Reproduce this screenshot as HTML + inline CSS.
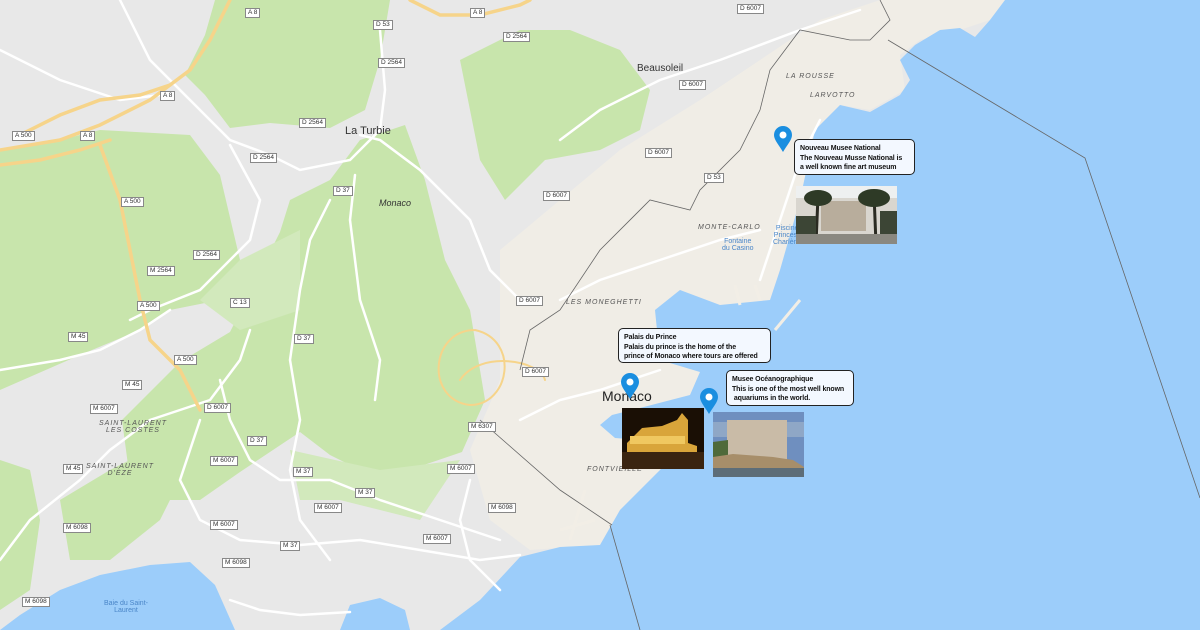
<!DOCTYPE html>
<html><head><meta charset="utf-8"><style>
html,body{margin:0;padding:0;width:1200px;height:630px;overflow:hidden;background:#e9e9e9;font-family:"Liberation Sans",sans-serif}
.box{position:absolute;background:#f3f8ff;border:1.5px solid #222;border-radius:5px;font:bold 7px/9.5px "Liberation Sans",sans-serif;color:#111;padding:4px 5px;box-sizing:border-box;white-space:nowrap;letter-spacing:-0.1px}
.ph{position:absolute}
.sh span{white-space:nowrap;line-height:8px}
</style></head><body>
<svg width="1200" height="630" style="position:absolute;left:0;top:0" xmlns="http://www.w3.org/2000/svg">
<rect width="1200" height="630" fill="#e8e8e8"/>
<path d="M500,250 L560,200 L620,150 L700,100 L760,60 L820,20 L880,0 L1005,0 L990,20 L960,30 L920,40 L900,55 L905,90 L870,110 L840,105 L815,130 L800,200 L780,270 L770,300 L720,310 L680,290 L655,310 L660,360 L700,372 L690,395 L640,408 L610,420 L630,440 L700,420 L660,470 L620,510 L600,545 L530,550 L490,520 L470,450 L500,380 Z" fill="#f0ede6"/>
<g fill="#c8e5ac">
<path d="M215,0 L390,0 L380,60 L365,110 L330,128 L270,123 L230,128 L205,95 L185,75 L205,35 Z"/>
<path d="M0,150 L60,140 L100,130 L190,135 L220,175 L240,260 L220,300 L170,310 L140,330 L80,355 L0,390 Z"/>
<path d="M290,200 L330,180 L360,140 L405,125 L425,180 L445,260 L470,310 L485,400 L462,452 L380,480 L330,455 L300,432 L240,472 L200,500 L160,500 L130,480 L122,420 L180,362 L230,332 L260,272 L280,232 Z"/>
<path d="M460,60 L520,30 L570,30 L620,50 L650,90 L640,130 L600,150 L545,160 L505,200 L480,160 L470,110 Z"/>
<path d="M0,460 L30,470 L40,520 L30,590 L0,610 Z"/>
<path d="M60,500 L110,470 L150,450 L180,480 L160,520 L110,560 L70,560 Z"/>
<path d="M290,450 L380,470 L460,460 L420,520 L340,500 L300,500 Z" fill="#d2e9bc"/>
<path d="M300,230 L240,260 L200,300 L240,330 L300,310 Z" fill="#d2e9bc"/>
</g>
<g fill="#9ccdfa">
<path d="M1005,0 L1200,0 L1200,630 L440,630 L480,600 L520,557 L560,547 L600,545 L620,510 L660,470 L700,420 L640,440 L615,438 L600,425 L612,415 L640,408 L690,395 L700,372 L660,360 L655,310 L680,290 L720,305 L770,300 L780,270 L800,200 L815,130 L840,105 L870,112 L900,95 L910,80 L900,60 L915,45 L940,30 L960,28 L975,37 L990,20 Z"/>
<path d="M0,630 L20,615 L60,590 L100,575 L150,565 L190,562 L215,585 L235,630 Z"/>
<path d="M340,630 L350,605 L380,598 L405,610 L410,630 Z"/>
</g>
<g stroke="#f2eee6" stroke-width="3" fill="none">
<path d="M800,300 L775,330"/><path d="M735,285 L740,305"/><path d="M755,285 L760,300"/>
<path d="M585,490 L570,540"/><path d="M595,520 L560,530"/>
</g>
<g stroke="#fff" stroke-width="2.5" fill="none" stroke-linecap="round">
<path d="M120,0 L150,60 L200,110 L230,140 L270,155 L300,170 L350,160 L380,130 L385,90 L380,30"/>
<path d="M230,145 L260,200 L250,240 L200,290 L150,310 L130,320"/>
<path d="M330,200 L310,240 L300,290 L290,360 L300,420 L290,470 L300,520 L330,560"/>
<path d="M355,175 L350,220 L360,300 L380,360 L375,400"/>
<path d="M360,135 L380,140 L420,170 L470,220 L490,270 L520,300"/>
<path d="M0,370 L60,360 L100,350 L140,330 L170,310"/>
<path d="M0,560 L30,520 L80,480 L110,450 L150,420 L180,410 L210,400 L240,360 L250,330"/>
<path d="M200,420 L180,480 L200,520 L240,540 L300,545 L360,540 L420,550 L480,560 L520,555"/>
<path d="M220,380 L230,420 L250,460 L280,480 L330,480 L380,500 L440,520 L500,540"/>
<path d="M470,480 L460,520 L470,560 L500,590"/>
<path d="M230,600 L260,610 L300,615 L350,612"/>
<path d="M560,300 L600,280 L660,260 L720,240 L760,230"/>
<path d="M520,420 L560,400 L600,390 L660,370"/>
<path d="M560,140 L600,110 L660,80 L720,60 L800,30 L860,10"/>
<path d="M760,280 L780,220 L800,160 L820,120"/>
<path d="M0,50 L60,80 L120,100 L160,95"/>
</g>
<g stroke="#f6d48a" stroke-width="3.5" fill="none" stroke-linecap="round">
<path d="M0,150 L60,140 L100,125 L150,100 L190,70 L210,40 L230,0"/>
<path d="M20,135 L60,115 L100,100 L140,95 L170,85"/>
<path d="M100,145 L120,200 L140,300 L150,340 L180,370 L200,410"/>
<path d="M0,165 L40,160 L80,150 L110,140"/>
<path d="M410,0 L440,15 L480,15 L520,5 L530,0"/>
<path d="M475,330 C430,330 425,400 470,405 C510,405 520,340 475,330" stroke-width="2"/>
<path d="M460,380 C480,350 540,360 545,380" stroke-width="2"/>
</g>
<g stroke="#666" stroke-width="0.8" fill="none">
<path d="M888,40 L1085,158 L1200,498"/>
<path d="M610,525 L640,630"/>
<path d="M880,0 L890,20 L870,40 L850,40 L800,30 L770,70 L760,110 L740,150 L700,190 L690,210 L650,200 L600,250 L560,310 L530,330 L520,370"/>
<path d="M480,420 L560,490 L612,525"/>
</g>
</svg>

<div style="position:absolute;left:0;top:0;width:1200px;height:630px;font-family:'Liberation Sans',sans-serif;white-space:nowrap">
<div style="position:absolute;left:345px;top:125px;font-size:11px;color:#333">La Turbie</div>
<div style="position:absolute;left:637px;top:63px;font-size:10px;color:#333">Beausoleil</div>
<div style="position:absolute;left:379px;top:198px;font-size:9px;font-style:italic;color:#333">Monaco</div>
<div style="position:absolute;left:602px;top:388px;font-size:14px;color:#222">Monaco</div>
<div style="position:absolute;left:786px;top:73px;font-size:7px;font-style:italic;color:#555;letter-spacing:1px">LA ROUSSE</div>
<div style="position:absolute;left:810px;top:92px;font-size:7px;font-style:italic;color:#555;letter-spacing:1px">LARVOTTO</div>
<div style="position:absolute;left:698px;top:224px;font-size:7px;font-style:italic;color:#555;letter-spacing:1px">MONTE-CARLO</div>
<div style="position:absolute;left:566px;top:299px;font-size:7px;font-style:italic;color:#555;letter-spacing:1px">LES MONEGHETTI</div>
<div style="position:absolute;left:587px;top:466px;font-size:7px;font-style:italic;color:#555;letter-spacing:1px">FONTVIEILLE</div>
<div style="position:absolute;left:99px;top:420px;font-size:7px;font-style:italic;color:#555;text-align:center;letter-spacing:1px">SAINT-LAURENT<br>LES COSTES</div>
<div style="position:absolute;left:86px;top:463px;font-size:7px;font-style:italic;color:#555;text-align:center;letter-spacing:1px">SAINT-LAURENT<br>D'ÈZE</div>
<div style="position:absolute;left:722px;top:238px;font-size:7px;color:#4a86c8;text-align:center">Fontaine<br>du Casino</div>
<div style="position:absolute;left:773px;top:225px;font-size:7px;color:#4a86c8;text-align:center">Piscine<br>Princess<br>Charlène</div>
<div style="position:absolute;left:104px;top:600px;font-size:7px;color:#4a86c8;text-align:center">Baie du Saint-<br>Laurent</div>
</div>

<div class="sh" style="position:absolute;left:0;top:0;font:6.5px 'Liberation Sans',sans-serif;color:#333">
<span style="position:absolute;left:245px;top:8px;border:1px solid #888;background:#fff;padding:0 2px">A 8</span>
<span style="position:absolute;left:470px;top:8px;border:1px solid #888;background:#fff;padding:0 2px">A 8</span>
<span style="position:absolute;left:160px;top:91px;border:1px solid #888;background:#fff;padding:0 2px">A 8</span>
<span style="position:absolute;left:80px;top:131px;border:1px solid #888;background:#fff;padding:0 2px">A 8</span>
<span style="position:absolute;left:12px;top:131px;border:1px solid #888;background:#fff;padding:0 2px">A 500</span>
<span style="position:absolute;left:373px;top:20px;border:1px solid #888;background:#fff;padding:0 2px">D 53</span>
<span style="position:absolute;left:503px;top:32px;border:1px solid #888;background:#fff;padding:0 2px">D 2564</span>
<span style="position:absolute;left:378px;top:58px;border:1px solid #888;background:#fff;padding:0 2px">D 2564</span>
<span style="position:absolute;left:299px;top:118px;border:1px solid #888;background:#fff;padding:0 2px">D 2564</span>
<span style="position:absolute;left:250px;top:153px;border:1px solid #888;background:#fff;padding:0 2px">D 2564</span>
<span style="position:absolute;left:193px;top:250px;border:1px solid #888;background:#fff;padding:0 2px">D 2564</span>
<span style="position:absolute;left:147px;top:266px;border:1px solid #888;background:#fff;padding:0 2px">M 2564</span>
<span style="position:absolute;left:121px;top:197px;border:1px solid #888;background:#fff;padding:0 2px">A 500</span>
<span style="position:absolute;left:137px;top:301px;border:1px solid #888;background:#fff;padding:0 2px">A 500</span>
<span style="position:absolute;left:174px;top:355px;border:1px solid #888;background:#fff;padding:0 2px">A 500</span>
<span style="position:absolute;left:333px;top:186px;border:1px solid #888;background:#fff;padding:0 2px">D 37</span>
<span style="position:absolute;left:230px;top:298px;border:1px solid #888;background:#fff;padding:0 2px">C 13</span>
<span style="position:absolute;left:294px;top:334px;border:1px solid #888;background:#fff;padding:0 2px">D 37</span>
<span style="position:absolute;left:68px;top:332px;border:1px solid #888;background:#fff;padding:0 2px">M 45</span>
<span style="position:absolute;left:122px;top:380px;border:1px solid #888;background:#fff;padding:0 2px">M 45</span>
<span style="position:absolute;left:90px;top:404px;border:1px solid #888;background:#fff;padding:0 2px">M 6007</span>
<span style="position:absolute;left:204px;top:403px;border:1px solid #888;background:#fff;padding:0 2px">D 6007</span>
<span style="position:absolute;left:247px;top:436px;border:1px solid #888;background:#fff;padding:0 2px">D 37</span>
<span style="position:absolute;left:210px;top:456px;border:1px solid #888;background:#fff;padding:0 2px">M 6007</span>
<span style="position:absolute;left:63px;top:464px;border:1px solid #888;background:#fff;padding:0 2px">M 45</span>
<span style="position:absolute;left:293px;top:467px;border:1px solid #888;background:#fff;padding:0 2px">M 37</span>
<span style="position:absolute;left:355px;top:488px;border:1px solid #888;background:#fff;padding:0 2px">M 37</span>
<span style="position:absolute;left:314px;top:503px;border:1px solid #888;background:#fff;padding:0 2px">M 6007</span>
<span style="position:absolute;left:210px;top:520px;border:1px solid #888;background:#fff;padding:0 2px">M 6007</span>
<span style="position:absolute;left:63px;top:523px;border:1px solid #888;background:#fff;padding:0 2px">M 6098</span>
<span style="position:absolute;left:280px;top:541px;border:1px solid #888;background:#fff;padding:0 2px">M 37</span>
<span style="position:absolute;left:222px;top:558px;border:1px solid #888;background:#fff;padding:0 2px">M 6098</span>
<span style="position:absolute;left:22px;top:597px;border:1px solid #888;background:#fff;padding:0 2px">M 6098</span>
<span style="position:absolute;left:468px;top:422px;border:1px solid #888;background:#fff;padding:0 2px">M 6307</span>
<span style="position:absolute;left:447px;top:464px;border:1px solid #888;background:#fff;padding:0 2px">M 6007</span>
<span style="position:absolute;left:488px;top:503px;border:1px solid #888;background:#fff;padding:0 2px">M 6098</span>
<span style="position:absolute;left:423px;top:534px;border:1px solid #888;background:#fff;padding:0 2px">M 6007</span>
<span style="position:absolute;left:543px;top:191px;border:1px solid #888;background:#fff;padding:0 2px">D 6007</span>
<span style="position:absolute;left:516px;top:296px;border:1px solid #888;background:#fff;padding:0 2px">D 6007</span>
<span style="position:absolute;left:522px;top:367px;border:1px solid #888;background:#fff;padding:0 2px">D 6007</span>
<span style="position:absolute;left:645px;top:148px;border:1px solid #888;background:#fff;padding:0 2px">D 6007</span>
<span style="position:absolute;left:679px;top:80px;border:1px solid #888;background:#fff;padding:0 2px">D 6007</span>
<span style="position:absolute;left:737px;top:4px;border:1px solid #888;background:#fff;padding:0 2px">D 6007</span>
<span style="position:absolute;left:704px;top:173px;border:1px solid #888;background:#fff;padding:0 2px">D 53</span>
</div>

<div class="box" style="left:794px;top:139px;width:121px;height:36px;padding-top:4px">Nouveau Musee National<br>The Nouveau Musse National is<br>a well known fine art museum</div>
<div class="box" style="left:618px;top:328px;width:153px;height:35px;padding-top:4px">Palais du Prince<br>Palais du prince is the home of the<br>prince of Monaco where tours are offered</div>
<div class="box" style="left:726px;top:370px;width:128px;height:36px;padding-top:4px">Musee Océanographique<br>This is one of the most well known<br>&nbsp;aquariums in the world.</div>

<svg class="ph" style="left:796px;top:186px" width="101" height="58"><rect width="101" height="58" fill="#d9d6cf"/><rect x="25" y="15" width="45" height="30" fill="#b8ad9c"/><rect x="0" y="0" width="101" height="12" fill="#eef0f0"/><path d="M20,58 L22,10 M80,58 L78,8" stroke="#2b2b22" stroke-width="3"/><ellipse cx="22" cy="12" rx="14" ry="8" fill="#2e3a26"/><ellipse cx="78" cy="12" rx="16" ry="9" fill="#2e3a26"/><rect x="0" y="30" width="20" height="20" fill="#3c4535"/><rect x="84" y="25" width="17" height="25" fill="#3c4535"/><rect y="48" width="101" height="10" fill="#8a8880"/></svg>
<svg class="ph" style="left:622px;top:408px" width="82" height="61"><rect width="82" height="61" fill="#1a0f05"/><path d="M5,35 L20,20 L40,18 L55,12 L60,5 L66,12 L66,35 L75,38 L75,44 L5,44 Z" fill="#d9a53a"/><rect x="8" y="28" width="55" height="8" fill="#f0c860"/><rect y="44" width="82" height="17" fill="#3a2410"/></svg>
<svg class="ph" style="left:713px;top:412px" width="91" height="65"><rect width="91" height="65" fill="#6f8fbf"/><rect y="10" width="91" height="15" fill="#8fa7c6"/><rect x="14" y="8" width="60" height="40" fill="#c9bba7"/><path d="M0,30 L15,28 L15,50 L0,55 Z" fill="#4f6a3a"/><path d="M0,45 L20,42 L60,45 L80,48 L91,55 L91,58 L0,58 Z" fill="#a78e6a"/><rect y="56" width="91" height="9" fill="#5d6d78"/></svg>

<svg class="ph" style="left:773px;top:125px" width="20" height="28" viewBox="0 0 20 28"><path d="M10,27 C6,20 1,15 1,10 A9,9 0 0 1 19,10 C19,15 14,20 10,27 Z" fill="#1a8ee0"/><circle cx="10" cy="10" r="3.5" fill="#fff"/></svg>
<svg class="ph" style="left:620px;top:372px" width="20" height="28" viewBox="0 0 20 28"><path d="M10,27 C6,20 1,15 1,10 A9,9 0 0 1 19,10 C19,15 14,20 10,27 Z" fill="#1a8ee0"/><circle cx="10" cy="10" r="3.5" fill="#fff"/></svg>
<svg class="ph" style="left:699px;top:387px" width="20" height="28" viewBox="0 0 20 28"><path d="M10,27 C6,20 1,15 1,10 A9,9 0 0 1 19,10 C19,15 14,20 10,27 Z" fill="#1a8ee0"/><circle cx="10" cy="10" r="3.5" fill="#fff"/></svg>
</body></html>
